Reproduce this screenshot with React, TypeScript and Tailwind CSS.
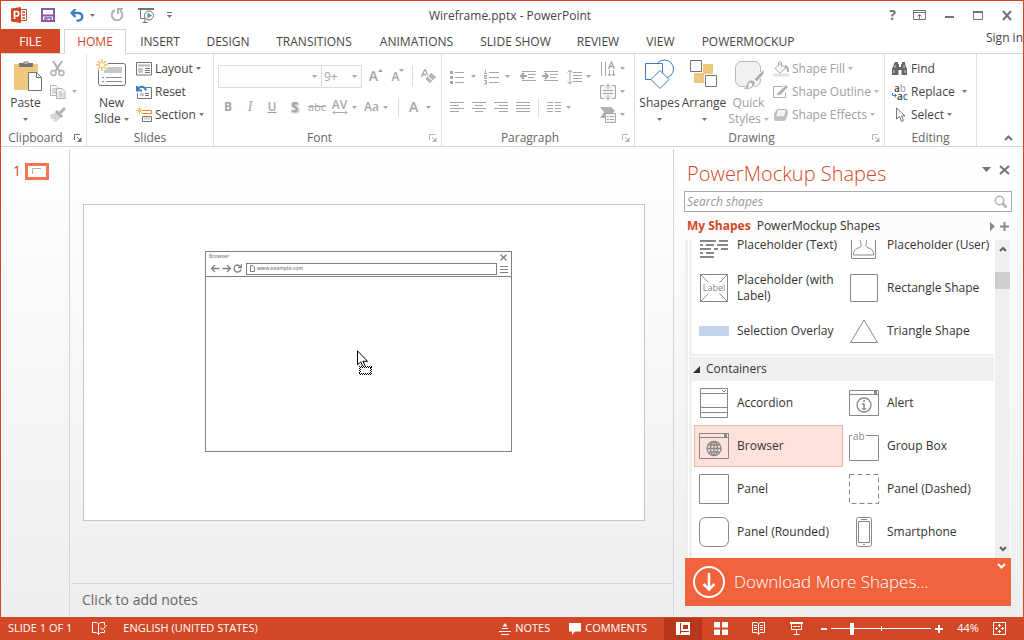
import type { ReactNode } from "react";
import clsx from "clsx";

interface IconProps {
  w?: number;
  h?: number;
  className?: string;
  children: ReactNode;
}

const Icon = ({ w = 16, h = 16, className, children }: IconProps) => (
  <svg
    width={w}
    height={h}
    viewBox={`0 0 ${w} ${h}`}
    fill="none"
    stroke="currentColor"
    className={clsx("shrink-0", className)}
    aria-hidden="true"
  >
    {children}
  </svg>
);

const Caret = ({ className }: { className?: string }) => (
  <Icon w={5} h={3} className={className}>
    <path d="M0 0h5L2.500 3z" fill="currentColor" stroke="none" />
  </Icon>
);

const Launcher = ({ muted = false }: { muted?: boolean }) => (
  <button
    aria-label="More options"
    className={clsx("ml-1", muted ? "text-[#b5b5b5]" : "text-[#737373]")}
  >
    <Icon w={8} h={8}>
      <path d="M.5 6V.5H6M3 3l3 3" />
      <path d="M7.500 3v5H3z" fill="currentColor" stroke="none" />
    </Icon>
  </button>
);

/* ---------- Title bar ---------- */

const TitleBar = () => (
  <header className="flex h-7 shrink-0 items-center text-[#737373]">
    <div className="flex flex-1 items-center pl-[10px]">
      <Icon w={16} h={16}>
        <path d="M9 2.500h6.500v11H9" fill="#fff" stroke="#d24726" />
        <path d="M11 5h3M11 8h3M11 11h3" stroke="#d24726" strokeWidth="1.500" />
        <path d="M0 1.500 10 0v16L0 14.500z" fill="#d24726" stroke="none" />
        <path d="M3.500 12V4.500H5.500a2 2 0 0 1 0 4.500H4" stroke="#fff" strokeWidth="1.700" />
      </Icon>
      <button aria-label="Save" className="ml-[14px] text-[#8a56ac]">
        <Icon w={14} h={14}>
          <path d="M1 1h12v12H1z" strokeWidth="2" />
          <path d="M2 7.500h10" strokeWidth="2" />
          <path d="M4 14v-4h6v4" strokeWidth="1.500" />
          <path d="M6 11v3" />
        </Icon>
      </button>
      <button aria-label="Undo" className="ml-[15px] flex items-center gap-[6px]">
        <Icon w={14} h={13} className="text-[#3e7dba]">
          <path d="M2 4h6.500a3.800 3.800 0 0 1 0 7.600H6.500" strokeWidth="2.400" />
          <path d="M5.500 0 1.500 4l4 4" strokeWidth="2.200" />
        </Icon>
        <Caret />
      </button>
      <button aria-label="Repeat" className="ml-[15px] text-[#b0b0b0]">
        <Icon w={14} h={14}>
          <path d="M5 2a5.300 5.300 0 1 0 5 .5" strokeWidth="2" />
          <path d="M8 6V1h5" strokeWidth="2" />
        </Icon>
      </button>
      <button aria-label="Start from beginning" className="ml-[14px]">
        <Icon w={17} h={15}>
          <path d="M0 1h16" strokeWidth="2" />
          <path d="M2.500 2v8.500H7M7 11v3M4.500 14.500h5" />
          <circle cx="11" cy="7.500" r="4.500" fill="#fff" />
          <path d="M9.500 4.500v6l4.500-3z" fill="#4aa37a" stroke="none" />
        </Icon>
      </button>
      <button aria-label="Customize toolbar" className="ml-3">
        <Icon w={5} h={6}>
          <path d="M0 .5h5" />
          <path d="M0 3h5L2.500 6z" fill="currentColor" stroke="none" />
        </Icon>
      </button>
    </div>
    <h1 className="pt-px pr-1 text-xs text-[#444]">Wireframe.pptx - PowerPoint</h1>
    <div className="flex flex-1 items-center justify-end gap-[17px] pr-[10px]">
      <button aria-label="Help" className="text-sm leading-4 font-bold">?</button>
      <button aria-label="Ribbon display options">
        <Icon w={13} h={11}>
          <path d="M.5.5h12v9H.5zM.5 2.500h12M6.500 9V4.500M4.500 6.500l2-2 2 2" />
        </Icon>
      </button>
      <button aria-label="Minimize">
        <Icon w={13} h={11}>
          <path d="M2 7h9" strokeWidth="2" />
        </Icon>
      </button>
      <button aria-label="Maximize">
        <Icon w={11} h={11}>
          <path d="M.5 1.500h9v8h-9z" />
          <path d="M0 2h10" strokeWidth="2" />
        </Icon>
      </button>
      <button aria-label="Close">
        <Icon w={12} h={11}>
          <path d="m2 1 8 9M10 1l-8 9" strokeWidth="2" />
        </Icon>
      </button>
    </div>
  </header>
);

const tabs = [
  { label: "INSERT", width: "w-[68px]" },
  { label: "DESIGN", width: "w-[68px]" },
  { label: "TRANSITIONS", width: "w-[104px]" },
  { label: "ANIMATIONS", width: "w-[101px]" },
  { label: "SLIDE SHOW", width: "w-[97px]" },
  { label: "REVIEW", width: "w-[68px]" },
  { label: "VIEW", width: "w-[57px]" },
  { label: "POWERMOCKUP", width: "w-[118px]" },
];

const TabRow = () => (
  <nav className="flex h-[25px] shrink-0 border-b border-[#d4d4d4] text-xs text-[#444]">
    <button className="h-6 w-[59px] bg-[#d24726] pt-px text-white">FILE</button>
    <button className="ml-1 h-[25px] w-[62px] border border-b-0 border-[#d4d4d4] bg-white text-[#d24726]">
      HOME
    </button>
    {tabs.map((tab) => (
      <button key={tab.label} className={clsx("pt-[2px] whitespace-nowrap", tab.width)}>
        {tab.label}
      </button>
    ))}
    <a href="#" className="ml-auto h-5 pt-px whitespace-nowrap">Sign in</a>
  </nav>
);

/* ---------- Ribbon ---------- */

interface GroupProps {
  label: string;
  width: string;
  launcher?: ReactNode;
  children: ReactNode;
}

const Group = ({ label, width, launcher, children }: GroupProps) => (
  <section className={clsx("flex shrink-0 flex-col", width)}>
    <div className="flex flex-1 border-r border-[#e1e1e1]">{children}</div>
    <div className={clsx("flex h-4 items-center border-r border-[#e1e1e1]", launcher && "pr-1")}>
      <h2 className="flex-1 text-center text-xs leading-4 text-[#666]">{label}</h2>
      {launcher}
    </div>
  </section>
);

const RowButton = ({
  icon,
  label,
  caret = true,
  muted = false,
}: {
  icon: ReactNode;
  label: string;
  caret?: boolean;
  muted?: boolean;
}) => (
  <button
    className={clsx(
      "flex h-[23px] items-center gap-[3px] text-xs whitespace-nowrap",
      muted ? "text-[#a0a0a0]" : "text-[#444]",
    )}
  >
    {icon}
    {label}
    {caret && <Caret className={muted ? "text-[#b5b5b5]" : "text-[#737373]"} />}
  </button>
);

const BigButton = ({
  icon,
  label,
  second,
  width,
  muted = false,
}: {
  icon: ReactNode;
  label: string;
  second?: string;
  width: string;
  muted?: boolean;
}) => (
  <button
    className={clsx(
      "flex flex-col items-center pt-[5px] text-xs leading-4",
      width,
      muted ? "text-[#a0a0a0]" : "text-[#444]",
    )}
  >
    <span className="flex h-9 items-start">{icon}</span>
    <span>{label}</span>
    <span className="flex h-4 items-center gap-[3px]">
      {second}
      <Caret className={muted ? "text-[#b5b5b5]" : "text-[#737373]"} />
    </span>
  </button>
);

const ClipboardGroup = () => (
  <Group label="Clipboard" width="w-[86px]" launcher={<Launcher />}>
    <BigButton
      width="w-[49px]"
      label="Paste"
      icon={
        <Icon w={28} h={32} className="mt-px ml-1">
          <path d="M0 4h24v26H0z" fill="#eec87c" stroke="none" />
          <path d="M5 7V3h4.500V1.500h5V3H19v4z" fill="#737373" stroke="none" />
          <path d="M10.500 3h3" stroke="#fff" />
          <path d="M14.500 12.500h8l5 5v13h-13z" fill="#fff" stroke="#737373" />
          <path d="M22.500 12.500v5h5" stroke="#737373" />
        </Icon>
      }
    />
    <div className="flex flex-col pt-[3px] text-[#b0b0b0]">
      <button aria-label="Cut" className="flex h-[23px] items-center">
        <Icon w={16} h={16}>
          <path d="m3 0 6.500 10M12 0 5.500 10" strokeWidth="2" />
          <circle cx="3.500" cy="12" r="2.500" strokeWidth="1.500" />
          <circle cx="11.500" cy="12" r="2.500" strokeWidth="1.500" />
        </Icon>
      </button>
      <button aria-label="Copy" className="flex h-[23px] items-center gap-[6px]">
        <Icon w={16} h={14}>
          <path d="M.5.5H6l3 3v7H.5zM2 4h4M2 6h4M2 8h4" />
          <path d="M6.500 3.500H12l3 3v7H6.500z" fill="#f6f2f8" />
          <path d="M8.500 7h3M8.500 9h5M8.500 11h5" />
        </Icon>
        <Caret />
      </button>
      <button aria-label="Format painter" className="flex h-[23px] items-center">
        <Icon w={16} h={15}>
          <path d="m0 8 7-3 4 5-5 5-3-1 1-2-3 0z" fill="#d9d4da" stroke="none" />
          <path d="m6 4 6 6" strokeWidth="3" />
          <path d="m10 6 5-5" strokeWidth="3" />
        </Icon>
      </button>
    </div>
  </Group>
);

const SlidesGroup = () => (
  <Group label="Slides" width="w-[127px]">
    <BigButton
      width="w-[49px]"
      label="New"
      second="Slide"
      icon={
        <Icon w={30} h={28} className="-ml-px">
          <path d="M2.500 4.500h25a2 2 0 0 1 2 2v18a2 2 0 0 1-2 2h-23a2 2 0 0 1-2-2z" fill="#fff" stroke="#737373" />
          <path d="M8 8h18v6H8z" fill="#c8c8c8" stroke="none" />
          <path d="M6 18.500h2M10 18.500h16M6 22.500h2M10 22.500h16" stroke="#8a8a8a" />
          <circle cx="6" cy="6" r="6" fill="#fff" stroke="none" />
          <path d="M6 0v12M0 6h12M2 2l8 8M10 2l-8 8" stroke="#eec06a" strokeWidth="1.600" />
          <circle cx="6" cy="6" r="2" fill="#fff" stroke="none" />
        </Icon>
      }
    />
    <div className="pt-[3px]">
      <RowButton
        label="Layout"
        icon={
          <Icon w={16} h={14} className="text-[#737373]">
            <path d="M.5.5h15v12.500H.5z" />
            <path d="M2 3.500h12" stroke="#b5b5b5" strokeWidth="2" />
            <path d="M2 6h5v5H2z" fill="#c8c8c8" stroke="none" />
            <path d="M9 6.500h5M9 8.500h5M9 10.500h5" />
          </Icon>
        }
      />
      <RowButton
        label="Reset"
        caret={false}
        icon={
          <Icon w={16} h={14} className="text-[#737373]">
            <path d="M1.500 8v5.500h14v-11H10" />
            <path d="M4 8h4v3H4z" fill="#c8c8c8" stroke="none" />
            <path d="M9 8.500h4M9 10.500h4" />
            <path d="M1.500 5C4 0 9 1 10 5.500M1 1v4.500h5" stroke="#3e7dba" strokeWidth="2" />
          </Icon>
        }
      />
      <RowButton
        label="Section"
        icon={
          <Icon w={16} h={16} className="text-[#737373]">
            <path d="M6 3.500h9.500v3H6" stroke="#e8832a" />
            <path d="M6.500 9.500h9v5h-9z" />
            <path d="M8 11.500h6" stroke="#c8c8c8" strokeWidth="2" />
            <path d="M3.500 0v7M0 3.500h7M1 1l5 5M6 1 1 6" stroke="#eec06a" />
          </Icon>
        }
      />
    </div>
  </Group>
);

const toolButton = "flex h-[22px] items-center justify-center";
const divider = "mt-px h-5 w-px bg-[#dcdcdc]";

const FontGroup = () => (
  <Group label="Font" width="w-[228px]" launcher={<Launcher muted />}>
    <div className="flex flex-col gap-2 pt-[11px] pl-1 text-[#a6a6a6]">
      <div className="flex h-[23px]">
        <div className="relative flex">
          <select
            aria-label="Font"
            className="h-[23px] w-[104px] appearance-none border border-[#dcdcdc] bg-[#fdfdfd]"
          />
          <Caret className="pointer-events-none absolute top-[10px] right-[5px]" />
        </div>
        <div className="relative -ml-px flex">
          <select
            aria-label="Font size"
            className="h-[23px] w-[41px] appearance-none border border-[#dcdcdc] bg-[#fdfdfd] pl-[2px] text-xs"
          >
            <option>9+</option>
          </select>
          <Caret className="pointer-events-none absolute top-[10px] right-[5px]" />
        </div>
        <button
          aria-label="Increase font size"
          className={clsx(toolButton, "ml-[3px] w-[22px] text-sm font-semibold")}
        >
          A<Caret className="mb-3 rotate-180" />
        </button>
        <button
          aria-label="Decrease font size"
          className={clsx(toolButton, "w-[22px] pt-px text-xs font-semibold")}
        >
          A<Caret className="mb-3" />
        </button>
        <span className={clsx(divider, "ml-[3px]")} />
        <button aria-label="Clear formatting" className={clsx(toolButton, "ml-2 w-[14px]")}>
          <Icon w={15} h={15}>
            <path d="m.5 8 3-7h1l2 5M2 5.500h3" strokeWidth="1.300" />
            <path d="M10 4.500 14.500 8 9 13.500 5 10z" fill="#bcb8bc" />
            <path d="m7 7.500 4.500 4" stroke="#fff" />
          </Icon>
        </button>
      </div>
      <div className="flex h-[22px] text-xs">
        <button className={clsx(toolButton, "-ml-px w-[22px] font-bold")}>B</button>
        <button className={clsx(toolButton, "w-[22px] font-['Liberation_Serif',serif] text-sm italic")}>I</button>
        <button className={clsx(toolButton, "w-[22px] font-semibold underline")}>U</button>
        <button className={clsx(toolButton, "w-[23px] text-sm font-bold [text-shadow:1px_1px_2px_#aaa]")}>
          S
        </button>
        <button className={clsx(toolButton, "w-[22px] text-[11px] line-through")}>abc</button>
        <button aria-label="Character spacing" className={clsx(toolButton, "w-[32px] gap-1")}>
          <span className="flex flex-col items-center leading-[11px] font-semibold">
            AV
            <Icon w={16} h={5}>
              <path d="M1 2.500h14M3 .5l-2 2 2 2M13 .5l2 2-2 2" />
            </Icon>
          </span>
          <Caret />
        </button>
        <button
          aria-label="Change case"
          className={clsx(toolButton, "ml-px w-[30px] gap-1 font-semibold")}
        >
          Aa <Caret />
        </button>
        <span className={clsx(divider, "ml-[7px]")} />
        <button
          aria-label="Font color"
          className={clsx(toolButton, "ml-[10px] gap-2 text-sm font-semibold")}
        >
          A <Caret />
        </button>
      </div>
    </div>
  </Group>
);

const alignments = [
  { label: "Align left", d: "M0 .5h14M0 3.500h9M0 6.500h14M0 9.500h9" },
  { label: "Center", d: "M0 .5h14M3 3.500h8M0 6.500h14M3 9.500h8" },
  { label: "Align right", d: "M0 .5h14M5 3.500h9M0 6.500h14M5 9.500h9" },
  { label: "Justify", d: "M0 .5h14M0 3.500h14M0 6.500h14M0 9.500h14" },
];

const ParagraphGroup = () => (
  <Group label="Paragraph" width="w-[193px]" launcher={<Launcher muted />}>
    <div className="flex w-[158px] flex-col gap-2 pt-[11px] pl-2 text-[#a6a6a6]">
      <div className="flex h-[23px] items-center">
        <button aria-label="Bullets" className="flex items-center gap-[7px]">
          <Icon w={14} h={14}>
            <path d="M5 2.500h9M5 7.500h9M5 12.500h9" />
            <path d="M0 2.500h3M0 7.500h3M0 12.500h3" strokeWidth="3" />
          </Icon>
          <Caret />
        </button>
        <button aria-label="Numbering" className="ml-2 flex items-center gap-[6px]">
          <Icon w={15} h={16}>
            <path d="M5 3.500h10M5 8.500h10M5 13.500h10" />
            <path d="M.5 1h1v3.500M0 4.500h3M0 6.500h2.500v1.500H.5v1.500H3M0 11.500h2.500v3.500H0M1 13.500h1" />
          </Icon>
          <Caret />
        </button>
        <button aria-label="Decrease indent" className="ml-[10px]">
          <Icon w={16} h={12}>
            <path d="M2 .5h14M8 3.500h8M8 6.500h6M2 9.500h14" />
            <path d="M1 5h6M4 2 1 5l3 3" strokeWidth="2" />
          </Icon>
        </button>
        <button aria-label="Increase indent" className="ml-[6px]">
          <Icon w={16} h={12}>
            <path d="M2 .5h14M8 3.500h8M8 6.500h6M2 9.500h14" />
            <path d="M0 5h6M3 2l3 3-3 3" strokeWidth="2" />
          </Icon>
        </button>
        <button aria-label="Line spacing" className="ml-[9px] flex items-center gap-1">
          <Icon w={15} h={16}>
            <path d="M6 3.500h9M6 6.500h9M6 9.500h9M6 12.500h9M3 1v14M.5 3.500 3 1l2.500 2.500M.5 12.500 3 15l2.500-2.500" />
          </Icon>
          <Caret />
        </button>
      </div>
      <div className="flex h-[22px] items-center gap-2">
        {alignments.map((align) => (
          <button key={align.label} aria-label={align.label}>
            <Icon w={14} h={10}>
              <path d={align.d} />
            </Icon>
          </button>
        ))}
        <span className={divider} />
        <button aria-label="Columns" className="flex items-center gap-[5px]">
          <Icon w={14} h={10}>
            <path d="M0 .5h6M0 3.500h6M0 6.500h6M0 9.500h6M8 .5h6M8 3.500h6M8 6.500h6M8 9.500h6" />
          </Icon>
          <Caret />
        </button>
      </div>
    </div>
    <div className="flex flex-col pt-[3px] text-[#a6a6a6]">
      <button aria-label="Text direction" className="flex h-[23px] items-center gap-1">
        <Icon w={16} h={16}>
          <path d="M1.500 1v14M5.500 1v14M9.500 9v6M13.500 9v6M8 13l1.500 2 1.500-2M12 13l1.500 2 1.500-2" />
          <path d="M8.500 8 11.500 1 14.500 8M9.500 5.500h4" strokeWidth="1.400" />
        </Icon>
        <Caret />
      </button>
      <button aria-label="Align text" className="flex h-[23px] items-center gap-1">
        <Icon w={16} h={16}>
          <path d="M1 2h14v12H1z" fill="#f6f2f8" stroke="none" />
          <path d="M4 1.500H.5v13H4M12 1.500h3.500v13H12M3 6.500h10M3 9.500h10M8 0v5M6 2.500 8 .5l2 2M8 16v-5M6 13.500l2 2 2-2" />
        </Icon>
        <Caret />
      </button>
      <button aria-label="Convert to SmartArt" className="flex h-[23px] items-center gap-1">
        <Icon w={16} h={16}>
          <path d="M0 0h11l4 4-3 3H5v4H0l4-6z" fill="#b0b0b0" stroke="none" />
          <path d="M5.500 6.500h10v9h-10z" fill="#f6f2f8" />
          <path d="M7 9.500h2M10 9.500h4M7 12.500h2M10 12.500h4" />
        </Icon>
        <Caret />
      </button>
    </div>
  </Group>
);

const DrawingGroup = () => (
  <Group label="Drawing" width="w-[250px]" launcher={<Launcher muted />}>
    <BigButton
      width="ml-[2px] w-[45px]"
      label="Shapes"
      icon={
        <Icon w={30} h={30} className="text-[#3e7dba]">
          <circle cx="19.500" cy="10" r="9" />
          <path d="M.5 4.500h17v16H.5z" fill="#fff" />
          <path d="m15 11.500 9 9-9 9-9-9z" fill="#fff" />
        </Icon>
      }
    />
    <BigButton
      width="w-[44px]"
      label="Arrange"
      icon={
        <Icon w={28} h={28} className="mt-px text-[#737373]">
          <path d="M13 4h10v10H13zM4 13h10v10H4z" fill="#eec87c" stroke="none" />
          <path d="M.5.5h11v11H.5zM15.500 15.500h11v11h-11z" fill="#fff" />
        </Icon>
      }
    />
    <BigButton
      width="w-[45px]"
      label="Quick"
      second="Styles"
      muted
      icon={
        <Icon w={30} h={30} className="mt-[2px] ml-[2px]">
          <rect x=".5" y=".5" width="25" height="25" rx="6" fill="#f3f0f4" stroke="#b5b5b5" />
          <path d="M29 8v5l-7 8-3-3z" fill="#b0b0b0" stroke="#fff" />
          <path d="M7 28c5 0 3-7 8-9 4-1 7 3 4 6-3 4-8 4-12 3z" fill="#b0b0b0" stroke="#fff" />
          <path d="M14 22c2-1 4 1 3 3-1 1-3 2-4 2z" fill="#fff" stroke="none" />
        </Icon>
      }
    />
    <div className="pt-[3px] pl-[2px]">
      <RowButton
        muted
        label="Shape Fill"
        icon={
          <Icon w={16} h={16} className="text-[#b0b0b0]">
            <path d="M0 12.500h16v3H0z" fill="#e4dfe5" stroke="none" />
            <path d="m7 2.500 6 4.500-6 5-5-4.500zM5.500 5V1.500L7 .5l1.500 1V6" fill="#f6f2f8" />
            <path d="M12 5c3 0 3 3 3 6" strokeWidth="2" />
          </Icon>
        }
      />
      <RowButton
        muted
        label="Shape Outline"
        icon={
          <Icon w={16} h={16} className="text-[#b0b0b0]">
            <path d="M12.500 8v5.500H.5V2.500h9" />
            <path d="m6 10 8-8" strokeWidth="3" />
            <path d="M3.500 11.500 7 10.500 5 8.500z" fill="currentColor" stroke="none" />
          </Icon>
        }
      />
      <RowButton
        muted
        label="Shape Effects"
        icon={
          <Icon w={16} h={16} className="text-[#b0b0b0]">
            <path d="M1 7c0-1 3-5 4-5h7c2 0 3 1 3 3 0 3-2 9-4 9H3c-2 0-2-1-2-3z" fill="#c4c0c4" stroke="none" />
            <path d="M5.500 2.500h6c1 0 2 1 1.500 2l-1 4c0 1-1 1.500-2 1.500H4c-1 0-1.500-1-1-2l1-4c0-1 .5-1.500 1.500-1.500z" fill="#f6f2f8" />
          </Icon>
        }
      />
    </div>
  </Group>
);

const EditingGroup = () => (
  <Group label="Editing" width="w-[92px]">
    <div className="pt-[3px] pl-[7px]">
      <RowButton
        label="Find"
        caret={false}
        icon={
          <Icon w={16} h={14} className="text-[#666]">
            <path d="M3 0h3v2h1v3h2V2h1V0h3v2l2 5v6H9.500V8h-3v5H0V7l2-5z" fill="currentColor" stroke="none" />
            <path d="M3 3v3M12 3v3M2 8v3M13 8v3" stroke="#fff" strokeWidth=".7" />
          </Icon>
        }
      />
      <button className="flex h-[23px] items-center gap-[3px] text-xs text-[#444]">
        <span className="flex w-4 flex-col text-[10px] leading-[8px] font-semibold">
          <span>
            a<span className="text-[#b0b0b0]">b</span>
          </span>
          <span className="flex items-center">
            <Icon w={5} h={5} className="text-[#3e7dba]">
              <path d="M.5 0v2.500H4M2.500.5l2 2-2 2" />
            </Icon>
            a<span className="text-[#3e7dba]">c</span>
          </span>
        </span>
        Replace
        <Caret className="ml-1 text-[#737373]" />
      </button>
      <RowButton
        label="Select"
        icon={
          <Icon w={16} h={16} className="text-[#737373]">
            <path d="M4.500 1v11l3-2.500 2 5 2-1-2-4.500H13z" fill="#fff" />
          </Icon>
        }
      />
    </div>
  </Group>
);

const Ribbon = () => (
  <div className="flex h-[93px] shrink-0 border-b border-[#d4d4d4] bg-white">
    <ClipboardGroup />
    <SlidesGroup />
    <FontGroup />
    <ParagraphGroup />
    <DrawingGroup />
    <EditingGroup />
    <button aria-label="Collapse the ribbon" className="mt-auto mr-[10px] mb-[5px] ml-auto text-[#737373]">
      <Icon w={9} h={6}>
        <path d="m1 5 3.500-3.500L8 5" strokeWidth="2" />
      </Icon>
    </button>
  </div>
);

/* ---------- Slide ---------- */

const BrowserMockup = () => (
  <div className="absolute top-[46px] left-[121px] flex h-[201px] w-[307px] flex-col border border-[#7f7f7f] text-[#7f7f7f]">
    <div className="border-b border-[#7f7f7f]">
      <div className="flex h-[10px] items-center justify-between pr-1 pl-[3px] text-[5px] font-semibold">
        Browser
        <Icon w={7} h={7}>
          <path d="m.5.500 6 6M6.500.500l-6 6" strokeWidth="1.300" />
        </Icon>
      </div>
      <div className="flex h-[14px] items-center pr-[3px] pb-px pl-[5px]">
        <Icon w={31} h={9}>
          <path
            d="M.5 4.500h8M4 1 .5 4.500 4 8M11.500 4.500h8M16 1l3.500 3.500L16 8"
            strokeWidth="1.300"
          />
          <path d="M29.500 2.500a3.500 3.500 0 1 0 .5 3M30.500 0v3.500H27" strokeWidth="1.300" />
        </Icon>
        <div className="ml-1 flex h-3 flex-1 items-center gap-[2px] border border-[#7f7f7f] pl-[3px] text-[5px] font-semibold">
          <Icon w={5} h={7}>
            <path d="M.5.5H3l1.500 1.500v4.500h-4z" />
          </Icon>
          www.example.com
        </div>
        <Icon w={8} h={8} className="ml-[3px]">
          <path d="M0 1.500h8M0 4.500h8M0 7.500h8" />
        </Icon>
      </div>
    </div>
  </div>
);

const DragCursor = () => (
  <Icon w={16} h={26} className="absolute top-[145px] left-[273px] text-black">
    <path d="M.5.8v14l3.200-3 3 6.500 2.200-1-3-6h4.600z" fill="#fff" />
    <path d="M2 16h13v9H2z" fill="#fff" stroke="none" />
    <path
      d="M2 16.500h13M3 17.500h12M2 23.500h13M3 24.500h12M2.500 18v5M3.500 17v6M13.500 18v5M14.500 17v6"
      strokeDasharray="1 1"
      shapeRendering="crispEdges"
    />
  </Icon>
);

const Editor = () => (
  <main className="flex min-w-0 flex-1 flex-col border-r border-[#d4d4d4]">
    <div className="flex flex-1 items-center pr-[28px] pb-[7px] pl-[13px]">
      <div className="relative aspect-[562/317] w-full border border-[#c6c6c6] bg-white">
        <BrowserMockup />
        <DragCursor />
      </div>
    </div>
    <textarea
      aria-label="Notes"
      placeholder="Click to add notes"
      className="ml-[2px] h-8 shrink-0 resize-none border-t border-[#d4d4d4] pt-[6px] pl-[10px] text-sm placeholder:text-[#666]"
    />
  </main>
);

/* ---------- PowerMockup pane ---------- */

const WindowFrame = ({ children }: { children: ReactNode }) => (
  <>
    <path d="M.5.5h29v25H.5zM.5 4.500h29" />
    <path d="M25 1h3v3h-3z" fill="currentColor" stroke="none" />
    {children}
  </>
);

interface Shape {
  label: string;
  height: number;
  drawing: ReactNode;
}

const basicShapes: Shape[] = [
  {
    label: "Placeholder (Text)",
    height: 26,
    drawing: (
      <path
        strokeWidth="2"
        d="M1 5h9M13 5h3M18 5h11M1 9h16M20 9h9M1 13h3M7 13h8M18 13h11M1 17h11M15 17h4M22 17h7M1 21h3M7 21h8M1 25h14"
      />
    ),
  },
  {
    label: "Placeholder (User)",
    height: 28,
    drawing: (
      <path d="M2.500.5h24v27h-24zM12 5c-2 7 1 8 0 10-1 3-8 1-7.500 9h20c.5-8-6.500-6-7.500-9-1-2 2-3 0-10" />
    ),
  },
  {
    label: "Placeholder (with Label)",
    height: 28,
    drawing: (
      <>
        <path d="M1.500.5h27v27h-27zM1.500.5l8 8M28.500.5l-8 8M1.500 27.500l8-8M28.500 27.500l-8-8" />
        <text x="15" y="17" textAnchor="middle" fontSize="9" fill="currentColor" stroke="none">
          Label
        </text>
      </>
    ),
  },
  { label: "Rectangle Shape", height: 28, drawing: <path d="M1.500.5h27v27h-27z" /> },
  {
    label: "Selection Overlay",
    height: 10,
    drawing: <path d="M0 0h30v10H0z" fill="#c3d3eb" stroke="none" />,
  },
  { label: "Triangle Shape", height: 24, drawing: <path d="M15 1 28.500 23.500h-27z" /> },
];

const containers: Shape[] = [
  {
    label: "Accordion",
    height: 30,
    drawing: (
      <path d="M1.500.5h27v29h-27zM1.500 5.500h27M1.500 19.500h27M1.500 24.500h27M23 2l2 2 2-2" />
    ),
  },
  {
    label: "Alert",
    height: 26,
    drawing: (
      <WindowFrame>
        <circle cx="15" cy="15" r="7" strokeWidth="1.300" />
        <path d="M15 10v2M15 13.500V19M13 14h2M13 19h4" strokeWidth="1.500" />
      </WindowFrame>
    ),
  },
  {
    label: "Browser",
    height: 26,
    drawing: (
      <WindowFrame>
        <circle cx="15" cy="15.500" r="7" strokeWidth="1.300" />
        <ellipse cx="15" cy="15.500" rx="3.500" ry="7" strokeWidth="1.300" />
        <path d="M15 8v15M8 15.500h14M9.500 12h11M9.500 19h11" strokeWidth="1.300" />
      </WindowFrame>
    ),
  },
  {
    label: "Group Box",
    height: 30,
    drawing: (
      <>
        <path d="M3 4.500H.5v25h29v-25H17" />
        <text x="4" y="9" fontSize="10" fill="currentColor" stroke="none">
          ab
        </text>
      </>
    ),
  },
  { label: "Panel", height: 30, drawing: <path d="M.5.5h29v29H.5z" /> },
  {
    label: "Panel (Dashed)",
    height: 30,
    drawing: <path d="M.5.5h29v29H.5z" strokeDasharray="5 3" />,
  },
  {
    label: "Panel (Rounded)",
    height: 30,
    drawing: <rect x=".5" y=".5" width="29" height="29" rx="6" />,
  },
  {
    label: "Smartphone",
    height: 30,
    drawing: (
      <>
        <rect x="7.500" y=".5" width="15" height="29" rx="2" />
        <path d="M9.500 4.500h11v21h-11zM12 2.500h6M14 27.500h2" />
      </>
    ),
  },
];

const ShapeGrid = ({ shapes, selected }: { shapes: Shape[]; selected?: string }) => (
  <div className="ml-[3px] grid grid-cols-2 bg-white pl-[2px]">
    {shapes.map((shape) => (
      <button
        key={shape.label}
        className={clsx(
          "mr-px mb-px flex h-[42px] items-center gap-2 border pl-1 text-left text-xs leading-4 text-[#333]",
          shape.label === selected
            ? "border-[#f4b59c] bg-[#fce2da]"
            : "border-transparent",
        )}
      >
        <Icon w={30} h={shape.height} className="text-[#888]">
          {shape.drawing}
        </Icon>
        <span>{shape.label}</span>
      </button>
    ))}
  </div>
);

const ShapesPane = () => (
  <aside className="flex w-[349px] shrink-0 flex-col pt-[7px] pr-[11px] pb-[9px] pl-[10px]">
    <div className="flex h-[35px] items-center text-[#737373]">
      <h2 className="flex-1 pl-[3px] text-xl font-light text-[#d24726]">PowerMockup Shapes</h2>
      <button aria-label="Pane options" className="mb-2">
        <Icon w={9} h={5}>
          <path d="M0 0h9L4.500 5z" fill="currentColor" stroke="none" />
        </Icon>
      </button>
      <button aria-label="Close pane" className="mr-[2px] mb-2 ml-2">
        <Icon w={11} h={10}>
          <path d="m1 1 9 8M10 1 1 9" strokeWidth="2" />
        </Icon>
      </button>
    </div>
    <label className="flex h-[21px] items-center border border-[#ababab] bg-white pr-[3px]">
      <input
        type="text"
        aria-label="Search shapes"
        placeholder="Search shapes"
        className="h-full min-w-0 flex-1 pl-[2px] text-xs italic outline-none placeholder:text-[#999]"
      />
      <Icon w={14} h={14} className="text-[#b5b5b5]">
        <circle cx="5.500" cy="5.500" r="4.200" strokeWidth="1.600" />
        <path d="m8.500 8.500 4 4" strokeWidth="2.600" />
      </Icon>
    </label>
    <div className="flex h-7 items-center pl-[3px] text-xs text-[#333]">
      <button className="font-bold text-[#d24726]">My Shapes</button>
      <button className="ml-[6px]">PowerMockup Shapes</button>
      <button aria-label="Next library" className="ml-auto text-[#888]">
        <Icon w={5} h={9}>
          <path d="M0 0v9l5-4.500z" fill="currentColor" stroke="none" />
        </Icon>
      </button>
      <button aria-label="Add library" className="mr-[3px] ml-[5px] text-[#888]">
        <Icon w={9} h={9}>
          <path d="M0 4.500h9M4.500 0v9" strokeWidth="2" />
        </Icon>
      </button>
    </div>
    <div className="mx-px flex h-0 flex-1 overflow-hidden border-r border-white bg-[#efefef] pl-[3px]">
      <div className="flex-1 border-l border-white">
        <div className="-mt-4 bg-[#efefef]">
          <ShapeGrid shapes={basicShapes} />
          <div className="ml-[3px] h-px bg-white" />
        </div>
        <h3 className="mt-[2px] border-t border-white">
          <button className="flex h-6 w-full items-center gap-[6px] pl-[4px] text-xs text-[#333]">
            <Icon w={7} h={7}>
              <path d="M7 0v7H0z" fill="currentColor" stroke="none" />
            </Icon>
            Containers
          </button>
        </h3>
        <div className="ml-[3px] h-px bg-white" />
        <ShapeGrid shapes={containers} selected="Browser" />
        <div className="ml-[3px] h-4 bg-white" />
      </div>
      <div className="flex w-4 flex-col items-center border-l border-white pt-[6px] pb-[6px] text-[#606060]">
        <Icon w={8} h={6}>
          <path d="m1 5 3-3 3 3" strokeWidth="2" />
        </Icon>
        <div className="mt-[20px] h-[17px] w-full bg-[#cdcdcd]" />
        <Icon w={8} h={6} className="mt-auto">
          <path d="m1 1 3 3 3-3" strokeWidth="2" />
        </Icon>
      </div>
    </div>
    <button className="mx-px flex h-12 shrink-0 items-center bg-[#f1623d] pr-[5px] pl-2 text-left text-[17px] font-light text-white">
      <Icon w={32} h={32}>
        <circle cx="16" cy="16" r="15" strokeWidth="2" />
        <path d="M16 7v16M10.500 18l5.500 5.500 5.500-5.500" strokeWidth="2.500" />
      </Icon>
      <span className="ml-[9px] flex-1">Download More Shapes...</span>
      <Icon w={9} h={6} className="mb-8">
        <path d="m1 1 3.500 3.500L8 1" strokeWidth="2" />
      </Icon>
    </button>
  </aside>
);

const Thumbnails = () => (
  <nav className="w-[69px] shrink-0 border-r border-[#d4d4d4] pt-[13px] pl-3">
    <button className="flex items-center gap-1 text-sm leading-[18px] text-[#d24726]">
      1
      <span className="flex h-[17px] w-6 border-[3px] border-[#f4754f] bg-white pt-[2px] pl-[4px]">
        <Icon w={10} h={7} className="text-[#b0b0b0]">
          <path d="M.5 6V.5H9" />
        </Icon>
      </span>
    </button>
  </nav>
);

/* ---------- Status bar ---------- */

const StatusBar = () => (
  <footer className="flex h-[23px] shrink-0 items-center bg-[#d24726] pl-2 text-[11px] whitespace-nowrap text-white">
    <span>SLIDE 1 OF 1</span>
    <button aria-label="Proofing" className="ml-[20px]">
      <Icon w={15} h={13}>
        <path d="M6.500 12.500V2L4.500.5h-4v10h4l2 2 2-2h4V8M6.500 2l2-1.500h4v3M8.500 5.500l2 2.500 4-5" />
      </Icon>
    </button>
    <button className="ml-[16px]">ENGLISH (UNITED STATES)</button>
    <button className="ml-auto flex items-center gap-1">
      <Icon w={12} h={12}>
        <path d="M3 5.500h6M0 8.500h12M2 11.500h8" />
        <path d="M3.500 3.500 6 0l2.500 3.500z" fill="currentColor" stroke="none" />
      </Icon>
      NOTES
    </button>
    <button className="ml-[19px] flex items-center gap-1">
      <Icon w={12} h={12}>
        <path d="M0 0h12v8.500H6L3 12V8.500H0z" fill="currentColor" stroke="none" />
      </Icon>
      COMMENTS
    </button>
    <div className="ml-[17px] flex h-[22px]">
      <button aria-label="Normal view" className="flex w-[38px] items-center justify-center bg-[#b7371c]">
        <Icon w={14} h={13}>
          <path d="M0 0h14v13H0z" fill="currentColor" stroke="none" />
          <path d="M4.500 1v11M4.500 9.500H13" stroke="#b7371c" />
          <path d="M7 3h5v4H7z" fill="#b7371c" stroke="none" />
        </Icon>
      </button>
      <button aria-label="Slide sorter" className="flex w-[38px] items-center justify-center">
        <Icon w={14} h={13}>
          <path d="M0 0h6v5.500H0zM8 0h6v5.500H8zM0 7.500h6V13H0zM8 7.500h6V13H8z" fill="currentColor" stroke="none" />
        </Icon>
      </button>
      <button aria-label="Reading view" className="flex w-[37px] items-center justify-center">
        <Icon w={13} h={13}>
          <path d="M.5.5H5l1.500 1L8 .5h4.500v10H8l-1.500 2-1.500-2H.5zM6.500 1.500v11M2 3.500h3M2 5.500h3M2 7.500h3M8 3.500h3M8 5.500h3M8 7.500h3" />
        </Icon>
      </button>
      <button aria-label="Slide show" className="flex w-[38px] items-center justify-center">
        <Icon w={13} h={13}>
          <path d="M0 1h13" strokeWidth="2" />
          <path d="M1.500 2v5.500h10V2M3 4.500h7M6.500 8v4M3.500 12.500h6" />
        </Icon>
      </button>
    </div>
    <button aria-label="Zoom out" className="ml-[6px]">
      <Icon w={6} h={8}>
        <path d="M0 4h6" strokeWidth="2" />
      </Icon>
    </button>
    <div className="relative ml-1 flex w-[100px] items-center">
      <input
        type="range"
        aria-label="Zoom"
        defaultValue={20}
        className="h-px w-full appearance-none bg-white [&::-webkit-slider-thumb]:h-3 [&::-webkit-slider-thumb]:w-1 [&::-webkit-slider-thumb]:appearance-none [&::-webkit-slider-thumb]:bg-white"
      />
      <span className="absolute left-1/2 h-[5px] w-px bg-white" />
    </div>
    <button aria-label="Zoom in" className="ml-1">
      <Icon w={8} h={8}>
        <path d="M0 4h8M4 0v8" strokeWidth="2" />
      </Icon>
    </button>
    <button className="w-[50px] text-center">44%</button>
    <button aria-label="Fit slide to window" className="mr-[18px]">
      <Icon w={13} h={13}>
        <path d="M.5.5h12v12H.5z" />
        <path d="M6.500 2v3M6.500 8v3M2 6.500h3M8 6.500h3M5 3.500h3M5 9.500h3M3.500 5v3M9.500 5v3" />
      </Icon>
    </button>
  </footer>
);

export default function App() {
  return (
    <div className="flex h-screen flex-col overflow-hidden bg-[#d24726] font-['Open_Sans','Noto_Sans',sans-serif]">
      <div className="mx-px mt-px flex min-h-0 flex-1 flex-col bg-white">
        <TitleBar />
        <TabRow />
        <Ribbon />
        <div className="flex min-h-0 flex-1 bg-linear-to-b from-white to-[#eeeeee] py-[2px]">
          <Thumbnails />
          <Editor />
          <ShapesPane />
        </div>
      </div>
      <StatusBar />
    </div>
  );
}
